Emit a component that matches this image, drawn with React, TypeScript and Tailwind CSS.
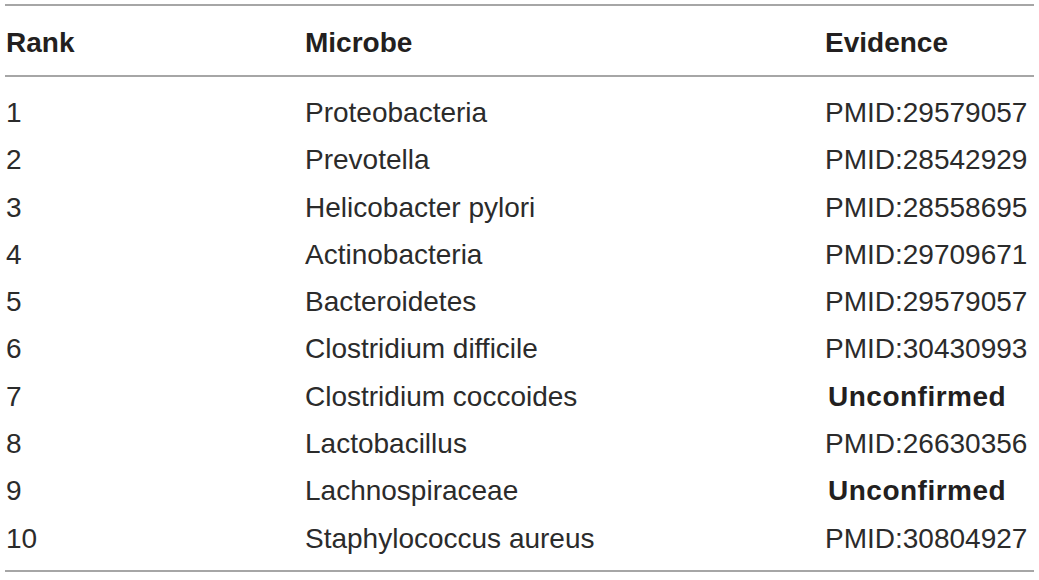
import React from "react";

const rows: [string, string, string, boolean][] = [
  ["1", "Proteobacteria", "PMID:29579057", false],
  ["2", "Prevotella", "PMID:28542929", false],
  ["3", "Helicobacter pylori", "PMID:28558695", false],
  ["4", "Actinobacteria", "PMID:29709671", false],
  ["5", "Bacteroidetes", "PMID:29579057", false],
  ["6", "Clostridium difficile", "PMID:30430993", false],
  ["7", "Clostridium coccoides", "Unconfirmed", true],
  ["8", "Lactobacillus", "PMID:26630356", false],
  ["9", "Lachnospiraceae", "Unconfirmed", true],
  ["10", "Staphylococcus aureus", "PMID:30804927", false],
];

export default function App() {
  return (
    <div
      className="w-[1039px] h-[580px] bg-white px-[5px] pt-[4px] text-[28px] text-[#2b2b2b]"
      style={{ fontFamily: '"Liberation Sans", Arial, sans-serif' }}
    >
      <div className="h-[2px] bg-[#a6a6a6]" />
      <div className="grid grid-cols-[300px_520px_1fr] pt-[13px] pb-[9px] leading-[47px] font-bold text-[#231f20]">
        <div className="pl-[1px]">Rank</div>
        <div>Microbe</div>
        <div>Evidence</div>
      </div>
      <div className="h-[2px] bg-[#a6a6a6]" />
      <div className="pt-[12px] pb-[8px]">
        {rows.map(([r, m, e, b]) => (
          <div key={r} className="grid grid-cols-[300px_520px_1fr] leading-[47.3px]">
            <div className="pl-[1px]">{r}</div>
            <div>{m}</div>
            <div className={b ? "font-bold pl-[3px] tracking-[0.5px] text-[#231f20]" : ""}>{e}</div>
          </div>
        ))}
      </div>
      <div className="h-[2px] bg-[#a6a6a6]" />
    </div>
  );
}
